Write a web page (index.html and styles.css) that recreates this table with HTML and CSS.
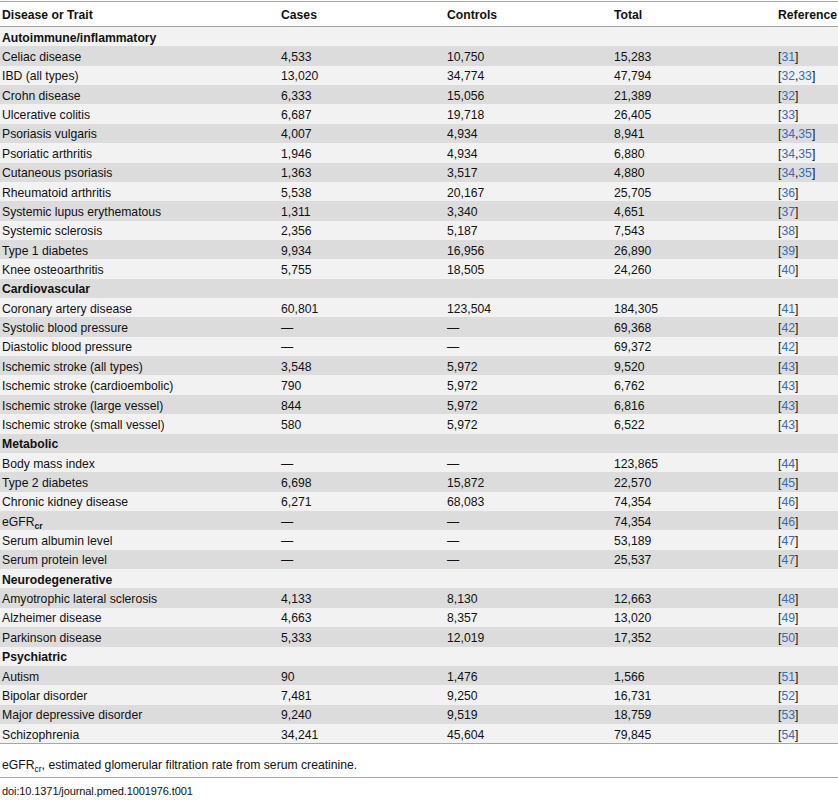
FILE: index.html
```html
<!DOCTYPE html>
<html lang="en">

<head>
  <meta charset="UTF-8">
  <meta name="viewport" content="width=device-width, initial-scale=1.0">
  <title>Table 1</title>
  <link rel="stylesheet" href="styles.css">
</head>

<body>
  <div class="table">
    <div class="row head">
      <div>Disease or Trait</div><div>Cases</div><div>Controls</div><div>Total</div><div>Reference</div>
    </div>

    <div class="row group"><div>Autoimmune/inflammatory</div><div></div><div></div><div></div><div></div></div>
    <div class="row"><div>Celiac disease</div><div>4,533</div><div>10,750</div><div>15,283</div><div>[<a>31</a>]</div></div>
    <div class="row"><div>IBD (all types)</div><div>13,020</div><div>34,774</div><div>47,794</div><div>[<a>32</a>,<a>33</a>]</div></div>
    <div class="row"><div>Crohn disease</div><div>6,333</div><div>15,056</div><div>21,389</div><div>[<a>32</a>]</div></div>
    <div class="row"><div>Ulcerative colitis</div><div>6,687</div><div>19,718</div><div>26,405</div><div>[<a>33</a>]</div></div>
    <div class="row"><div>Psoriasis vulgaris</div><div>4,007</div><div>4,934</div><div>8,941</div><div>[<a>34</a>,<a>35</a>]</div></div>
    <div class="row"><div>Psoriatic arthritis</div><div>1,946</div><div>4,934</div><div>6,880</div><div>[<a>34</a>,<a>35</a>]</div></div>
    <div class="row"><div>Cutaneous psoriasis</div><div>1,363</div><div>3,517</div><div>4,880</div><div>[<a>34</a>,<a>35</a>]</div></div>
    <div class="row"><div>Rheumatoid arthritis</div><div>5,538</div><div>20,167</div><div>25,705</div><div>[<a>36</a>]</div></div>
    <div class="row"><div>Systemic lupus erythematous</div><div>1,311</div><div>3,340</div><div>4,651</div><div>[<a>37</a>]</div></div>
    <div class="row"><div>Systemic sclerosis</div><div>2,356</div><div>5,187</div><div>7,543</div><div>[<a>38</a>]</div></div>
    <div class="row"><div>Type 1 diabetes</div><div>9,934</div><div>16,956</div><div>26,890</div><div>[<a>39</a>]</div></div>
    <div class="row"><div>Knee osteoarthritis</div><div>5,755</div><div>18,505</div><div>24,260</div><div>[<a>40</a>]</div></div>

    <div class="row group"><div>Cardiovascular</div><div></div><div></div><div></div><div></div></div>
    <div class="row"><div>Coronary artery disease</div><div>60,801</div><div>123,504</div><div>184,305</div><div>[<a>41</a>]</div></div>
    <div class="row"><div>Systolic blood pressure</div><div>—</div><div>—</div><div>69,368</div><div>[<a>42</a>]</div></div>
    <div class="row"><div>Diastolic blood pressure</div><div>—</div><div>—</div><div>69,372</div><div>[<a>42</a>]</div></div>
    <div class="row"><div>Ischemic stroke (all types)</div><div>3,548</div><div>5,972</div><div>9,520</div><div>[<a>43</a>]</div></div>
    <div class="row"><div>Ischemic stroke (cardioembolic)</div><div>790</div><div>5,972</div><div>6,762</div><div>[<a>43</a>]</div></div>
    <div class="row"><div>Ischemic stroke (large vessel)</div><div>844</div><div>5,972</div><div>6,816</div><div>[<a>43</a>]</div></div>
    <div class="row"><div>Ischemic stroke (small vessel)</div><div>580</div><div>5,972</div><div>6,522</div><div>[<a>43</a>]</div></div>

    <div class="row group"><div>Metabolic</div><div></div><div></div><div></div><div></div></div>
    <div class="row"><div>Body mass index</div><div>—</div><div>—</div><div>123,865</div><div>[<a>44</a>]</div></div>
    <div class="row"><div>Type 2 diabetes</div><div>6,698</div><div>15,872</div><div>22,570</div><div>[<a>45</a>]</div></div>
    <div class="row"><div>Chronic kidney disease</div><div>6,271</div><div>68,083</div><div>74,354</div><div>[<a>46</a>]</div></div>
    <div class="row"><div>eGFR<sub class="sub-b">cr</sub></div><div>—</div><div>—</div><div>74,354</div><div>[<a>46</a>]</div></div>
    <div class="row"><div>Serum albumin level</div><div>—</div><div>—</div><div>53,189</div><div>[<a>47</a>]</div></div>
    <div class="row"><div>Serum protein level</div><div>—</div><div>—</div><div>25,537</div><div>[<a>47</a>]</div></div>

    <div class="row group"><div>Neurodegenerative</div><div></div><div></div><div></div><div></div></div>
    <div class="row"><div>Amyotrophic lateral sclerosis</div><div>4,133</div><div>8,130</div><div>12,663</div><div>[<a>48</a>]</div></div>
    <div class="row"><div>Alzheimer disease</div><div>4,663</div><div>8,357</div><div>13,020</div><div>[<a>49</a>]</div></div>
    <div class="row"><div>Parkinson disease</div><div>5,333</div><div>12,019</div><div>17,352</div><div>[<a>50</a>]</div></div>

    <div class="row group"><div>Psychiatric</div><div></div><div></div><div></div><div></div></div>
    <div class="row"><div>Autism</div><div>90</div><div>1,476</div><div>1,566</div><div>[<a>51</a>]</div></div>
    <div class="row"><div>Bipolar disorder</div><div>7,481</div><div>9,250</div><div>16,731</div><div>[<a>52</a>]</div></div>
    <div class="row"><div>Major depressive disorder</div><div>9,240</div><div>9,519</div><div>18,759</div><div>[<a>53</a>]</div></div>
    <div class="row"><div>Schizophrenia</div><div>34,241</div><div>45,604</div><div>79,845</div><div>[<a>54</a>]</div></div>
  </div>

  <p class="note">eGFR<sub>cr</sub>, estimated glomerular filtration rate from serum creatinine.</p>
  <p class="doi">doi:10.1371/journal.pmed.1001976.t001</p>
</body>

</html>
```

FILE: styles.css
```css
html,
body {
  margin: 0;
  background: #fff;
  color: #111;
  font-family: "Liberation Sans", Arial, sans-serif;
  font-size: 12.2px;
}

.table {
  margin-top: 1px;
  border-top: 1px solid #a6a6a6;
  border-bottom: 1px solid #a6a6a6;
}

.row {
  display: grid;
  grid-template-columns: 279px 166px 167px 164px 1fr;
  align-items: center;
  height: 19.36px;
}

.row div {
  padding: 2px 0 0 2px;
  white-space: nowrap;
}

.row:nth-child(even) {
  background-color: #f2f2f2;
}

.row:nth-child(odd) {
  background-color: #dcdcdc;
}

.row.head {
  height: 24px;
  background-color: #fff;
  border-bottom: 1px solid #a6a6a6;
  font-weight: bold;
}

.group {
  font-weight: bold;
}

a {
  color: #3a6bb4;
}

sub {
  font-size: 8.5px;
  line-height: 0;
  vertical-align: -3px;
}

.sub-b {
  font-weight: bold;
}

.note {
  margin: 0;
  padding: 14px 0 4px 2px;
  line-height: 15px;
  border-bottom: 1px solid #a6a6a6;
}

.doi {
  margin: 0;
  padding: 6px 0 0 2px;
  line-height: 14px;
  font-size: 11px;
  letter-spacing: -0.1px;
}
```
